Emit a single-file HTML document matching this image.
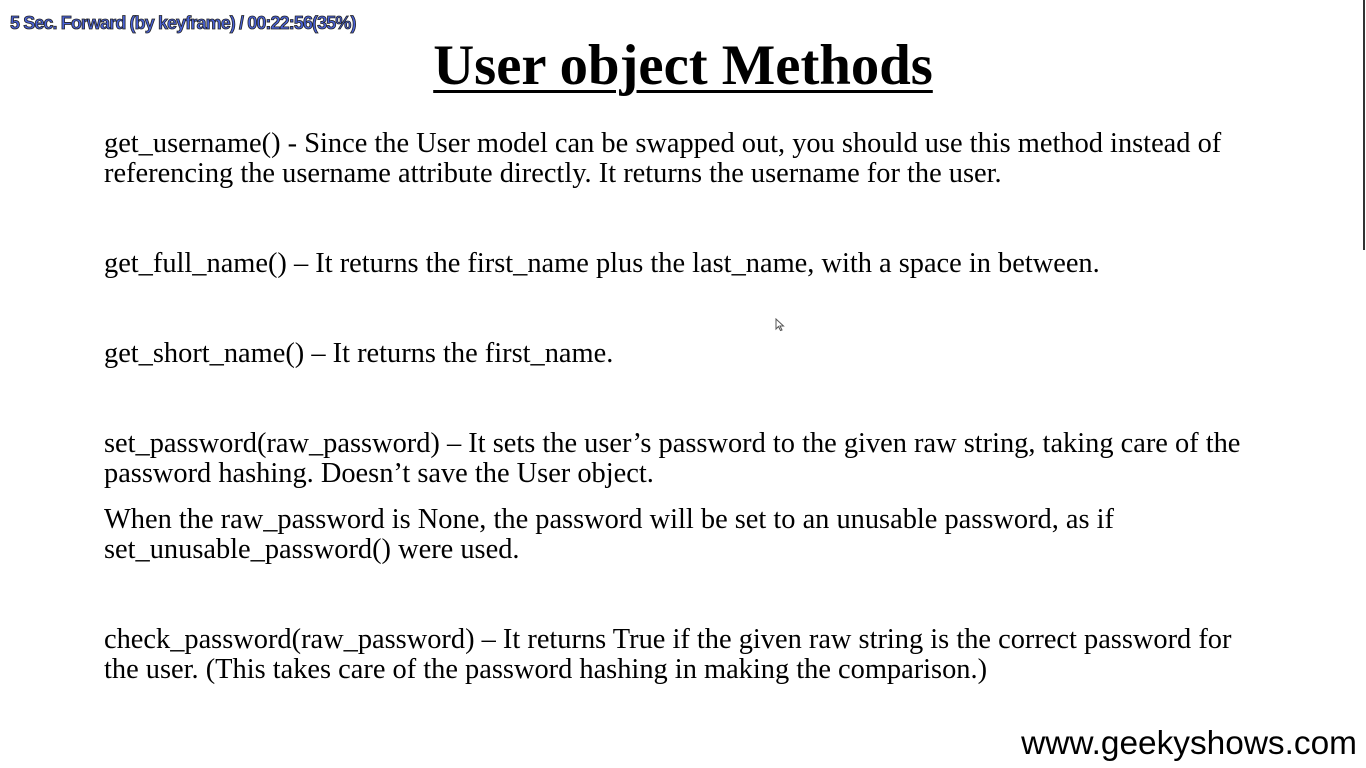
<!DOCTYPE html>
<html><head><meta charset="utf-8"><style>
body{margin:0;width:1366px;height:768px;background:#fff;position:relative;overflow:hidden;font-family:"Liberation Serif",serif;color:#000}
.o{position:absolute;left:10px;top:13px;font:bold 18px "Liberation Sans",sans-serif;color:#4a62d8;letter-spacing:-0.9px;-webkit-text-stroke:0.8px #222;}
h1{position:absolute;left:0;width:1366px;top:33px;margin:0;text-align:center;font-size:56.7px;font-weight:bold;text-decoration:underline;text-decoration-thickness:3px;text-underline-offset:6px}
p{position:absolute;left:104px;margin:0;font-size:28.4px;line-height:30px;white-space:nowrap}
.w{position:absolute;right:9px;top:725px;font:33.4px "Liberation Sans",sans-serif}
.bar{position:absolute;left:1363px;top:0;width:2px;height:250px;background:#333}
</style></head><body>
<div class="o">5 Sec. Forward (by keyframe) / 00:22:56(35%)</div>
<h1>User object Methods</h1>
<p style="top:129px">get_username() - Since the User model can be swapped out, you should use this method instead of<br>referencing the username attribute directly. It returns the username for the user.</p>
<p style="top:249px">get_full_name() – It returns the first_name plus the last_name, with a space in between.</p>
<p style="top:339px">get_short_name() – It returns the first_name.</p>
<p style="top:429px">set_password(raw_password) – It sets the user’s password to the given raw string, taking care of the<br>password hashing. Doesn’t save the User object.</p>
<p style="top:505px">When the raw_password is None, the password will be set to an unusable password, as if<br>set_unusable_password() were used.</p>
<p style="top:625px">check_password(raw_password) – It returns True if the given raw string is the correct password for<br>the user. (This takes care of the password hashing in making the comparison.)</p>
<div class="w">www.geekyshows.com</div>
<svg style="position:absolute;left:775px;top:318px" width="10" height="14"><path d="M1 1 L1 11 L3.5 8.5 L5.5 12.5 L7 12 L5 8 L8.5 8 Z" fill="#fff" stroke="#555" stroke-width="1"/></svg>
<div class="bar"></div>
</body></html>
